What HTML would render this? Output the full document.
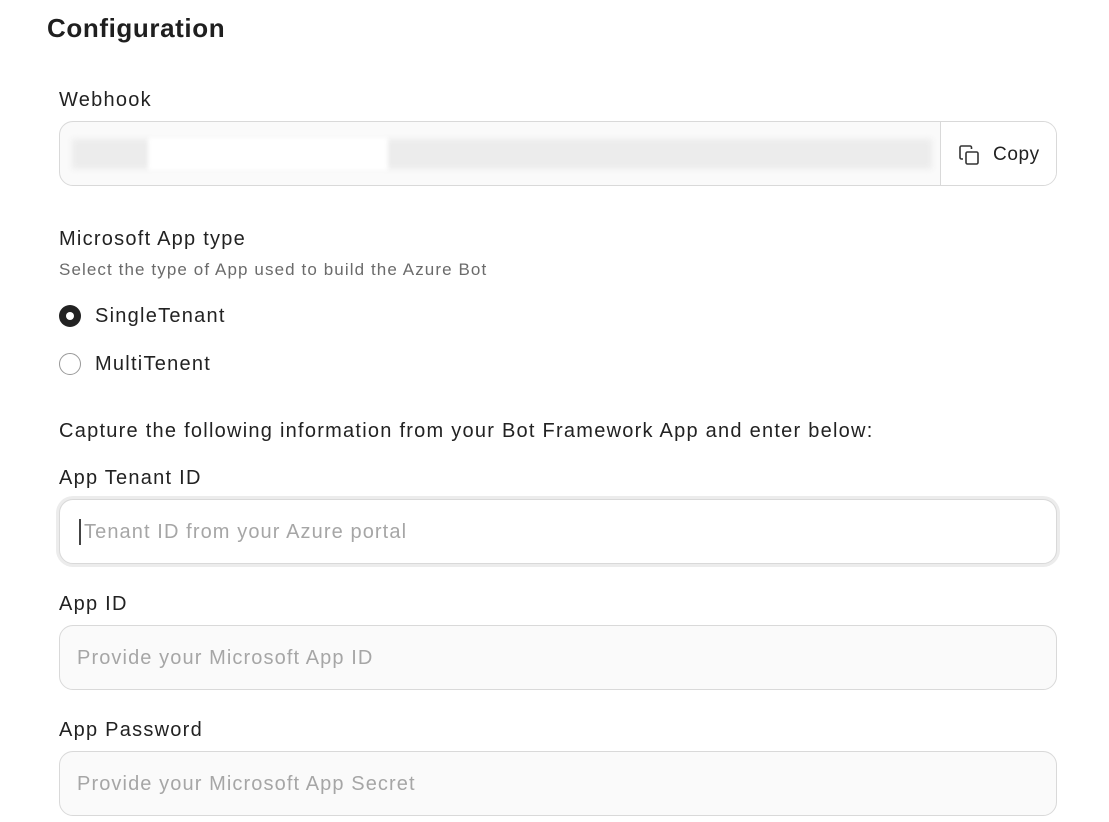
<!DOCTYPE html>
<html><head><style>
body{margin:0;background:#fff;font-family:"Liberation Sans",sans-serif;color:#1f1f1f;width:1109px;height:822px;overflow:hidden;position:relative}
.a{position:absolute;white-space:nowrap}
h1{position:absolute;left:47px;top:13px;margin:0;font-size:26px;font-weight:600;letter-spacing:0.6px}
.lbl{font-size:20px;color:#222;letter-spacing:1.25px}
.inp{position:absolute;left:59px;width:998px;height:62px;border:1px solid #d9d9d9;border-radius:14px;background:#fafafa;box-sizing:border-box}
.ph{position:absolute;left:17px;top:18px;font-size:20px;color:#a6a6a6;letter-spacing:1.1px;white-space:nowrap}
</style></head><body>
<h1>Configuration</h1>
<div class="a lbl" style="left:59px;top:89px">Webhook</div>
<div class="inp" style="top:121px;height:65px;overflow:hidden">
 <div class="a" style="left:12px;top:17px;width:860px;height:30px;background:#ececec;filter:blur(3px)"></div>
 <div class="a" style="left:88px;top:15px;width:240px;height:34px;background:#fff;filter:blur(2px)"></div>
 <div class="a" style="left:880px;top:0;width:1px;height:65px;background:#d9d9d9"></div>
 <div class="a" style="left:881px;top:0;width:117px;height:65px;background:#fff"></div>
 <svg class="a" style="left:898px;top:22px" width="22" height="22" viewBox="0 0 22 22" fill="none" stroke="#333" stroke-width="1.6"><path d="M5 15H3.5a1.5 1.5 0 0 1-1.5-1.5V3.5A1.5 1.5 0 0 1 3.5 2H12a1.5 1.5 0 0 1 1.5 1.5V5"/><rect x="8" y="8" width="12" height="12" rx="1.5"/></svg>
 <div class="a" style="left:933px;top:22px;font-size:19px;color:#222;letter-spacing:0.6px">Copy</div>
</div>
<div class="a lbl" style="left:59px;top:228px">Microsoft App type</div>
<div class="a" style="left:59px;top:260px;font-size:17px;color:#6b6b6b;letter-spacing:1.1px">Select the type of App used to build the Azure Bot</div>
<div class="a" style="left:59px;top:305px;width:22px;height:22px;border-radius:50%;background:#222"></div>
<div class="a" style="left:66px;top:312px;width:8px;height:8px;border-radius:50%;background:#fff"></div>
<div class="a lbl" style="left:95px;top:305px">SingleTenant</div>
<div class="a" style="left:59px;top:353px;width:20px;height:20px;border-radius:50%;border:1.5px solid #999"></div>
<div class="a lbl" style="left:95px;top:353px">MultiTenent</div>
<div class="a lbl" style="left:59px;top:420px">Capture the following information from your Bot Framework App and enter below:</div>
<div class="a lbl" style="left:59px;top:467px">App Tenant ID</div>
<div class="inp" style="top:499px;height:65px;background:#fff;box-shadow:0 0 0 3px #ececec">
 <div class="a" style="left:19px;top:19px;width:2px;height:26px;background:#444"></div>
 <div class="ph" style="left:24px;top:21px">Tenant ID from your Azure portal</div>
</div>
<div class="a lbl" style="left:59px;top:593px">App ID</div>
<div class="inp" style="top:625px;height:65px"><div class="ph" style="top:21px">Provide your Microsoft App ID</div></div>
<div class="a lbl" style="left:59px;top:719px">App Password</div>
<div class="inp" style="top:751px;height:65px"><div class="ph" style="top:21px">Provide your Microsoft App Secret</div></div>
</body></html>
